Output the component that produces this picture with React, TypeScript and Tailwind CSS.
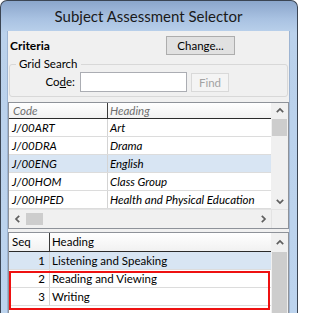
import React from 'react';

type Dir = 'up' | 'down' | 'left' | 'right';

function Chevron({ dir, color = '#5f5f5f' }: { dir: Dir; color?: string }) {
  const points = {
    up: '0.8,5.2 4,2 7.2,5.2',
    down: '0.8,2.8 4,6 7.2,2.8',
    left: '5.2,0.8 2,4 5.2,7.2',
    right: '2.8,0.8 6,4 2.8,7.2',
  }[dir];
  return (
    <svg width="8" height="8" viewBox="0 0 8 8">
      <polyline points={points} fill="none" stroke={color} strokeWidth="1.7" />
    </svg>
  );
}

// vertical scrollbar, thumb height is given in px
function VScroll({ arrowH, thumbH, showDown }: { arrowH: number; thumbH: number | null; showDown: boolean }) {
  return (
    <div className="w-[17px] h-full flex flex-col bg-[#f0f0f0]">
      <div className="flex items-center justify-center shrink-0" style={{ height: arrowH }}>
        <Chevron dir="up" />
      </div>
      {thumbH === null ? (
        <div className="flex-1 mx-[1px] bg-[#cdcdcd]" />
      ) : (
        <div className="mx-[1px] bg-[#cdcdcd] shrink-0" style={{ height: thumbH }} />
      )}
      {showDown && (
        <>
          <div className="flex-1" />
          <div className="h-[17px] flex items-center justify-center shrink-0">
            <Chevron dir="down" />
          </div>
        </>
      )}
    </div>
  );
}

const subjects = [
  { code: 'J/00ART', heading: 'Art' },
  { code: 'J/00DRA', heading: 'Drama' },
  { code: 'J/00ENG', heading: 'English', selected: true },
  { code: 'J/00HOM', heading: 'Class Group' },
  { code: 'J/00HPED', heading: 'Health and Physical Education' },
];

export default function App() {
  return (
    <div className="w-[298px] h-[313px] overflow-hidden bg-white font-['Lato',sans-serif] text-[11.5px] text-black leading-[16px]">
      <div className="w-[298px] h-[313px] flex flex-col rounded-t-[7px] border-t border-x border-[#3b4553] pl-[6px] pr-[7px] bg-[linear-gradient(to_bottom,#8ba6cb_0px,#a9c2e2_18px,#bad1eb_32px,#bdd4ee_100%)]">
        {/* title bar */}
        <div className="h-[30px] shrink-0 flex items-center justify-center text-[15px] text-[#1a1a1a] pb-[1px]">
          Subject Assessment Selector
        </div>

        {/* client area */}
        <div className="flex-1 flex flex-col bg-[#f0f0f0] border-x border-[#9db4d2] min-h-0">
          {/* criteria */}
          <div className="h-[25px] shrink-0 flex items-start pt-[5px]">
            <div className="w-[158px] pl-[2px] pt-[2px] font-bold text-[12px]">Criteria</div>
            <button className="w-[69px] h-[19px] border border-[#adadad] bg-[#e1e1e1] flex items-center justify-center leading-none">
              Change...
            </button>
          </div>

          <fieldset className="mx-[1px] border border-[#d8d8d8] rounded-[3px] pb-[4px] shrink-0">
            <legend className="ml-[6px] px-[3px] leading-[16px]">Grid Search</legend>
            <div className="flex items-start">
              <div className="w-[70px] h-[20px] flex items-center justify-end pr-[5px]">
                Co<span className="underline">d</span>e:
              </div>
              <div className="w-[107px] h-[20px] border border-[#abadb3] bg-white" />
              <button
                disabled
                className="ml-[4px] mt-[1px] w-[38px] h-[19px] border border-[#d9d9d9] bg-[#f4f4f4] text-[#a3a3a3] flex items-center justify-center leading-none"
              >
                Find
              </button>
            </div>
          </fieldset>

          {/* subjects grid */}
          <div className="mt-[5px] h-[127px] shrink-0 border border-[#8e9299] flex flex-col bg-white">
            <div className="flex h-[106px]">
              <div className="flex-1 flex flex-col">
                <div className="h-[16px] flex border-b border-[#2b2b2b] bg-[linear-gradient(to_bottom,#ffffff,#f1f1f1)] italic text-[#6e6e6e]">
                  <div className="w-[99px] pl-[4px] border-r border-[#3a3a3a] leading-[15px]">Code</div>
                  <div className="flex-1 pl-[2px] leading-[15px]">Heading</div>
                </div>
                {subjects.map(s => (
                  <div
                    key={s.code}
                    className={`h-[18px] flex border-b border-[#dcdcdc] italic ${s.selected ? 'bg-[#d8e5f3]' : 'bg-white'}`}
                  >
                    <div className="w-[99px] pl-[3px] border-r border-[#d4d4d4] leading-[17px]">{s.code}</div>
                    <div className="flex-1 pl-[2px] leading-[17px] whitespace-nowrap">{s.heading}</div>
                  </div>
                ))}
              </div>
              <VScroll arrowH={16} thumbH={17} showDown />
            </div>
            <div className="flex h-[19px] bg-[#f0f0f0] border-t border-[#e3e3e3]">
              <div className="w-[17px] flex items-center justify-center">
                <Chevron dir="left" />
              </div>
              <div className="w-[17px] my-[3px] bg-[#cdcdcd]" />
              <div className="flex-1" />
              <div className="w-[17px] flex items-center justify-center">
                <Chevron dir="right" />
              </div>
              <div className="w-[17px] border-l border-[#e3e3e3]" />
            </div>
          </div>

          {/* criteria grid */}
          <div className="mt-[3px] flex-1 min-h-0 border-x border-t border-[#8e9299] flex bg-white overflow-hidden">
            <div className="flex-1 flex flex-col">
              <div className="h-[19px] shrink-0 flex border-b border-[#2b2b2b] bg-[linear-gradient(to_bottom,#ffffff,#f1f1f1)]">
                <div className="w-[41px] pl-[3px] border-r border-[#3a3a3a] leading-[18px]">Seq</div>
                <div className="flex-1 pl-[2px] leading-[18px]">Heading</div>
              </div>
              <div className="h-[18px] shrink-0 flex border-b border-[#dcdcdc] bg-[#d8e5f3]">
                <div className="w-[41px] pr-[4px] text-right border-r border-[#d4d4d4] leading-[17px]">1</div>
                <div className="flex-1 pl-[2px] leading-[17px]">Listening and Speaking</div>
              </div>
              <div className="relative">
                {[
                  { seq: 2, heading: 'Reading and Viewing' },
                  { seq: 3, heading: 'Writing' },
                ].map(r => (
                  <div key={r.seq} className="h-[18px] flex border-b border-[#dcdcdc]">
                    <div className="w-[41px] pr-[4px] text-right border-r border-[#d4d4d4] leading-[17px]">{r.seq}</div>
                    <div className="flex-1 pl-[2px] leading-[17px]">{r.heading}</div>
                  </div>
                ))}
                {/* annotation box */}
                <div className="absolute left-0 right-[1px] top-[1px] bottom-[-4px] border-2 border-[#ee1111]" />
              </div>
            </div>
            <VScroll arrowH={19} thumbH={null} showDown={false} />
          </div>
        </div>
      </div>
    </div>
  );
}
